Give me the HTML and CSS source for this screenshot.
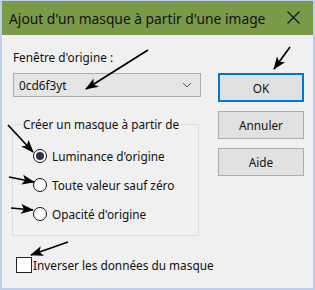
FILE: index.html
```html
<!DOCTYPE html>
<html lang="fr">
<head>
    <meta charset="utf-8">
    <title>Ajout d'un masque</title>
    <link rel="stylesheet" href="styles.css">
</head>
<body>
    <div class="window">
        <div class="titlebar">
            <span class="title">Ajout d'un masque à partir d'une image</span>
            <svg class="close" width="13" height="13" viewBox="0 0 13 13">
                <path d="M0.5 0.5 L12.5 12.5 M12.5 0.5 L0.5 12.5" stroke="#111" stroke-width="1.1" fill="none"/>
            </svg>
        </div>
        <div class="content">
            <div class="main">
                <div class="left">
                    <div class="label">Fenêtre d'origine :</div>
                    <div class="combo">
                        <span>0cd6f3yt</span>
                        <svg width="10" height="6" viewBox="0 0 10 6">
                            <path d="M1 1 L5 5 L9 1" stroke="#555" stroke-width="1" fill="none"/>
                        </svg>
                    </div>
                    <div class="group">
                        <div class="legend">Créer un masque à partir de</div>
                        <div class="radio"><span class="dot checked"></span>Luminance d'origine</div>
                        <div class="radio"><span class="dot"></span>Toute valeur sauf zéro</div>
                        <div class="radio"><span class="dot"></span>Opacité d'origine</div>
                    </div>
                </div>
                <div class="buttons">
                    <button class="btn default">OK</button>
                    <button class="btn">Annuler</button>
                    <button class="btn">Aide</button>
                </div>
            </div>
            <div class="check"><span class="box"></span>Inverser les données du masque</div>
        </div>

        <!-- flèches dessinées par dessus -->
        <svg class="arrows" width="315" height="290" viewBox="0 0 315 290">
            <defs>
                <marker id="tete" markerWidth="13" markerHeight="10" refX="12" refY="5" orient="auto" markerUnits="userSpaceOnUse">
                    <path d="M0 0 L13 5 L0 10 L3 5 Z" fill="#000"/>
                </marker>
            </defs>
            <g stroke="#000" stroke-width="1.7" fill="none" marker-end="url(#tete)">
                <line x1="148" y1="50" x2="86" y2="89"/>
                <line x1="290" y1="47" x2="274" y2="69"/>
                <line x1="8" y1="125" x2="33" y2="152"/>
                <line x1="9" y1="177" x2="34" y2="182"/>
                <line x1="11" y1="208" x2="33" y2="210"/>
                <line x1="68" y1="242" x2="31" y2="255"/>
            </g>
        </svg>
    </div>
</body>
</html>
```

FILE: styles.css
```css
body {
    margin: 0;
    font-family: "Noto Sans", sans-serif;
}

.window {
    position: relative;
    width: 315px;
    height: 290px;
    box-sizing: border-box;
    border: 2px solid #bfcdee;
    border-top-width: 1px;
    background-color: #f0f0f0;
    display: flex;
    flex-direction: column;
}

.titlebar {
    height: 34px;
    background-color: #7a9a4a;
    display: flex;
    align-items: center;
    justify-content: space-between;
    padding: 0 13px 0 7px;
}

.title {
    font-size: 13.8px;
    color: #111;
}

.close {
    margin-bottom: 1px;
}

.content {
    flex: 1;
    padding: 14px 9px 0 11px;
    font-size: 11.8px;
    color: #111;
}

.main {
    display: flex;
    justify-content: space-between;
}

.left {
    width: 188px;
}

.label {
    height: 17px;
    line-height: 17px;
    margin-bottom: 7px;
}

.combo {
    height: 24px;
    box-sizing: border-box;
    border: 1px solid #adadad;
    background-color: #e5e5e5;
    display: flex;
    align-items: center;
    justify-content: space-between;
    padding: 0 8px 0 5px;
}

.group {
    position: relative;
    margin-top: 27px;
    margin-left: -1px;
    width: 187px;
    height: 112px;
    box-sizing: border-box;
    border: 1px solid #dcdcdc;
    padding-top: 16px;
}

.legend {
    position: absolute;
    top: -9px;
    left: 8px;
    padding: 0 2px;
    background-color: #f0f0f0;
    line-height: 17px;
}

.radio {
    display: flex;
    align-items: center;
    height: 29px;
    padding-left: 20px;
}

.dot {
    width: 12px;
    height: 12px;
    border: 1px solid #111;
    border-radius: 50%;
    background-color: #fff;
    margin-right: 5px;
    position: relative;
}

.dot.checked::after {
    content: "";
    position: absolute;
    left: 2px;
    top: 2px;
    width: 8px;
    height: 8px;
    border-radius: 50%;
    background-color: #2b3440;
}

.buttons {
    display: flex;
    flex-direction: column;
    gap: 9px;
    padding-top: 24px;
}

.btn {
    width: 86px;
    height: 28px;
    margin: 0;
    border: 1px solid #adadad;
    background-color: #e1e1e1;
    font-family: "Noto Sans", sans-serif;
    font-size: 11.8px;
    color: #111;
}

.btn.default {
    height: 29px;
    border: 2px solid #0078d7;
}

.check {
    display: flex;
    align-items: center;
    margin-top: 21px;
    margin-left: 3px;
}

.box {
    width: 14px;
    height: 14px;
    border: 1px solid #222;
    background-color: #fff;
    margin-right: 1px;
}

.arrows {
    position: absolute;
    left: -2px;
    top: -1px;
    pointer-events: none;
}
```
